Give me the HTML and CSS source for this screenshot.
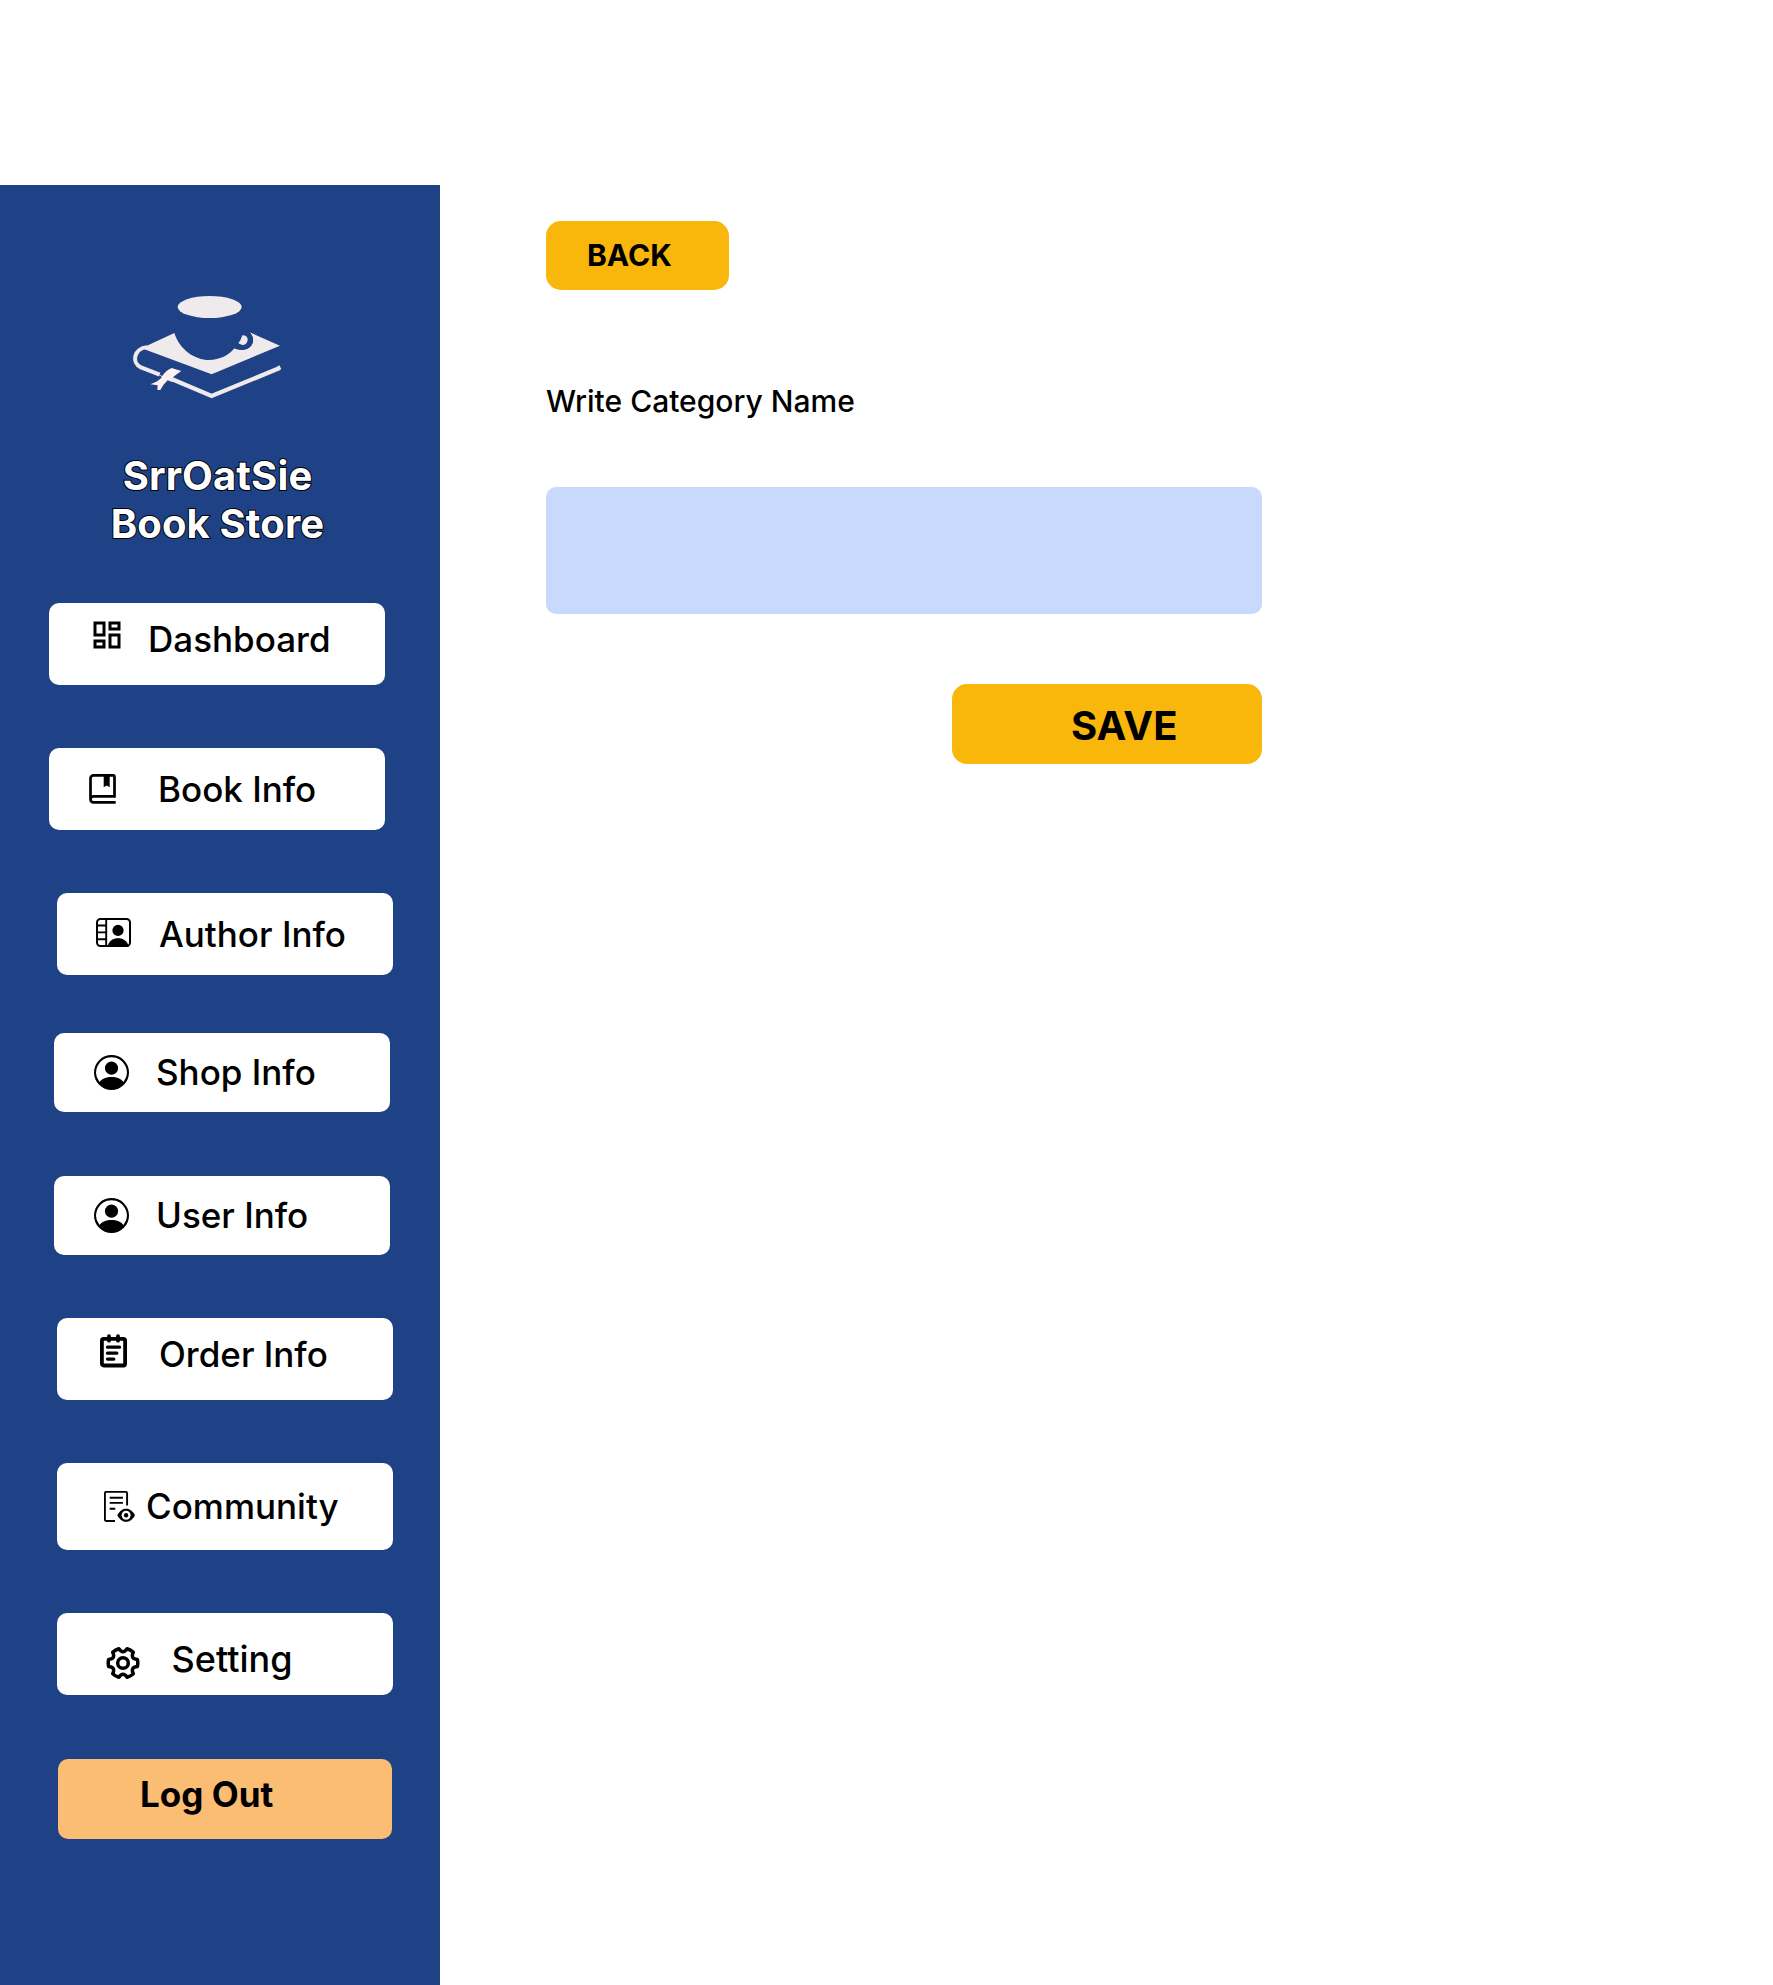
FILE: index.html
```html
<!DOCTYPE html>
<html lang="en">
<head>
<meta charset="utf-8">
<title>SrrOatSie Book Store</title>
<link rel="stylesheet" href="styles.css">
</head>
<body>
<div class="layout">
  <aside class="sidebar">
    <svg class="logo" viewBox="100 76 446 312" aria-hidden="true">
      <ellipse cx="330" cy="112" rx="96" ry="33" fill="#efebec"/>
      <path d="M132 233L224 190C240 240 285 271 328 271C360 271 388 257 404 236C430 247 462 236 460 209C460 201 455 194 450 188L541 228L336 314L138 240Z" fill="#efebec"/>
      <path d="M424 194C440 190 450 200 448 212C446 226 432 233 410 225" fill="none" stroke="#1f4186" stroke-width="6"/>
      <path d="M404 236L410 222L424 193L450 188C464 204 464 222 450 233C438 243 420 243 404 236Z" fill="#1f4186"/>
      <path d="M428 197Q445 197 444 211Q442 226 428 226L416 221Q424 211 428 197Z" fill="#efebec"/>
      <path d="M142 233C104 235 94 279 124 293L180 315" fill="none" stroke="#efebec" stroke-width="12"/>
      <path d="M214 327L336 379L540 295" fill="none" stroke="#efebec" stroke-width="13"/>
      <path d="M534 290L539 287L545 298L536 302Z" fill="#efebec"/>
      <path d="M216 295Q230 300 245 304Q224 318 213 329L220 338L204 332Q190 345 182 361L173 361L174 347L152 344Q176 336 187 322L174 313L188 319Q198 303 216 295Z" fill="#fff1f1"/>
    </svg>
    <h1 class="brand">SrrOatSie<br>Book Store</h1>
    <nav class="menu">
      <a class="item dashboard">
        <svg class="icon" width="36" height="36" viewBox="0 0 24 24"><path d="M13 9V3h8v6zM3 13V3h8v10zm10 8V11h8v10zM3 21v-6h8v6zm2-10h4V5H5zm10 8h4v-6h-4zm0-12h4V5h-4zM5 19h4v-2H5z"/></svg>
        <span class="label">Dashboard</span>
      </a>
      <a class="item book">
        <svg class="icon" width="27" height="30" viewBox="0 0 27 30"><path class="line" stroke-width="2.7" d="M26.7 28.4H4.5a3 3 0 0 1-3-3V4.3a3 3 0 0 1 3-3H24a1.500 1.500 0 0 1 1.500 1.500v19.500H4.500a3 3 0 0 0-3 3"/><path d="M14.700 1h6v12.300l-3-1.900-3 1.900z"/></svg>
        <span class="label">Book Info</span>
      </a>
      <a class="item author">
        <svg class="icon" width="35" height="29" viewBox="0 0 35 29"><rect class="line" x="1" y="1" width="33" height="27" rx="3.5" stroke-width="2"/><path class="line" stroke-width="1.900" d="M10.200 1v27M1 7.500h9M1 14.400h9M1 21.300h9"/><circle cx="22" cy="12.400" r="5.600"/><path d="M11.500 28.500C13 22.600 17 20.300 22 20.300S31 22.600 33 28.500z"/></svg>
        <span class="label">Author Info</span>
      </a>
      <a class="item shop">
        <svg class="icon" width="35" height="35" viewBox="0 0 16 16"><path d="M11 6a3 3 0 1 1-6 0 3 3 0 0 1 6 0"/><path fill-rule="evenodd" d="M0 8a8 8 0 1 1 16 0A8 8 0 0 1 0 8m8-7a7 7 0 0 0-5.468 11.370C3.242 11.226 4.805 10 8 10s4.757 1.225 5.468 2.370A7 7 0 0 0 8 1"/></svg>
        <span class="label">Shop Info</span>
      </a>
      <a class="item user">
        <svg class="icon" width="35" height="35" viewBox="0 0 16 16"><path d="M11 6a3 3 0 1 1-6 0 3 3 0 0 1 6 0"/><path fill-rule="evenodd" d="M0 8a8 8 0 1 1 16 0A8 8 0 0 1 0 8m8-7a7 7 0 0 0-5.468 11.370C3.242 11.226 4.805 10 8 10s4.757 1.225 5.468 2.370A7 7 0 0 0 8 1"/></svg>
        <span class="label">User Info</span>
      </a>
      <a class="item order">
        <svg class="icon" width="27" height="34" viewBox="0 0 27 34"><rect class="line" x="1.9" y="4.900" width="23.200" height="26.600" rx="1.800" stroke-width="3.800"/><path class="line" stroke-linecap="round" stroke-width="3.800" d="M9 2.100v4.600M18 2.100v4.600"/><path class="line" stroke-linecap="round" stroke-width="3.300" d="M7.500 13.200h12M7.500 19.200h9.300M7.500 25.100h6.300"/></svg>
        <span class="label">Order Info</span>
      </a>
      <a class="item community">
        <svg class="icon" width="31" height="31" viewBox="0 0 31 31"><path class="line" stroke-width="1.900" d="M11 30H2.400a1.500 1.500 0 0 1-1.500-1.500V2.400A1.500 1.500 0 0 1 2.400.900h19.200a1.500 1.500 0 0 1 1.500 1.500v12.100M5.700 6.700h13.200M5.700 11.900h13.200M5.700 17.700h5.600"/><path d="M13.300 24.200C16 19.600 19 17.800 22.100 17.800S28.300 19.600 31 24.200C28.300 29 25.300 30.800 22.100 30.800S16 29 13.300 24.200z"/><circle class="hole" cx="22.100" cy="24.300" r="4.500"/><circle cx="22.100" cy="24.300" r="2.200"/></svg>
        <span class="label">Community</span>
      </a>
      <a class="item setting">
        <svg class="icon" width="34" height="34" viewBox="-17 -17 34 34"><path class="line" stroke-width="3.500" stroke-linejoin="round" d="M14.360-3.580A14.800 14.800 0 0 1 14.360 3.580Q7.190 4.150 10.280 10.650A14.800 14.800 0 0 1 4.080 14.230Q0 8.300-4.080 14.230A14.800 14.800 0 0 1-10.280 10.650Q-7.190 4.150-14.360 3.580A14.800 14.800 0 0 1-14.360-3.580Q-7.190-4.150-10.280-10.650A14.800 14.800 0 0 1-4.080-14.230Q0-8.300 4.080-14.230A14.800 14.800 0 0 1 10.280-10.650Q7.190-4.150 14.360-3.580z"/><circle class="line" r="5.300" stroke-width="3.500"/></svg>
        <span class="label">Setting</span>
      </a>
      <a class="item logout"><span class="label">Log Out</span></a>
    </nav>
  </aside>
  <main class="content">
    <button class="btn back">BACK</button>
    <label class="field-label" for="category">Write Category Name</label>
    <input class="field" id="category" type="text">
    <button class="btn save">SAVE</button>
  </main>
</div>
</body>
</html>
```
FILE: styles.css
```css
* { box-sizing: border-box; }

body {
  margin: 0;
  padding-top: 185px;
  background: #fff;
  color: #000;
  font-family: Inter, sans-serif;
}

.layout {
  display: flex;
  height: 1800px;
}

.sidebar {
  width: 440px;
  padding-top: 110px;
  background: #1f4186;
}

.logo {
  display: block;
  width: 148.67px;
  height: 104px;
  margin-left: 133.33px;
}

.brand {
  width: 435px;
  margin: 53px 0 0;
  color: #fff;
  font-size: 40px;
  font-weight: 700;
  line-height: 48px;
  letter-spacing: 0.12px;
  text-align: center;
  -webkit-text-stroke: 2px #000;
  paint-order: stroke fill;
}

.menu {
  display: flex;
  flex-direction: column;
  gap: 63px;
  margin-top: 55px;
}

.item {
  display: flex;
  align-items: flex-start;
  width: 336px;
  height: 82px;
  margin-left: 57px;
  border-radius: 10px;
  background: #fff;
}

.icon {
  flex: none;
  fill: #000;
}

.line {
  fill: none;
  stroke: #000;
}

.hole { fill: #fff; }

.label {
  font-size: 35px;
  font-weight: 500;
  line-height: 44px;
  white-space: nowrap;
}

.dashboard { margin-left: 49px; padding-left: 40px; }
.dashboard .icon { margin-top: 14px; }
.dashboard .label { margin: 14px 0 0 23px; }

.book { margin-left: 49px; padding-left: 40px; }
.book .icon { margin-top: 26px; }
.book .label { margin: 19px 0 0 42px; }

.author { padding-left: 39px; }
.author .icon { margin-top: 25.3px; }
.author .label { margin: 19px 0 0 28px; }

.shop { height: 79px; margin: -5px 0 0 54px; padding-left: 40px; }
.shop .icon { margin-top: 22px; }
.shop .label { margin: 17px 0 0 27px; }

.user { height: 79px; margin: 1px 0 0 54px; padding-left: 40px; }
.user .icon { margin-top: 22px; }
.user .label { margin: 17px 0 0 27px; }

.order { padding-left: 43px; }
.order .icon { margin-top: 15.5px; }
.order .label { margin: 14px 0 0 32px; }

.community { height: 87px; padding-left: 47px; }
.community .icon { margin-top: 28px; }
.community .label { margin: 21px 0 0 11px; }

.setting { padding-left: 48.5px; }
.setting .icon { margin-top: 32.5px; }
.setting .label { margin: 24px 0 0 32px; font-size: 36px; }

.logout {
  width: 334px;
  height: 80px;
  margin: 1px 0 0 58px;
  padding-left: 82px;
  background: #fbbc74;
}
.logout .label { margin-top: 13px; font-weight: 700; }

.content {
  display: flex;
  flex-direction: column;
  align-items: flex-start;
  width: 822px;
  padding: 36px 0 0 106px;
}

.btn {
  border: 0;
  border-radius: 15px;
  background: #f9b60b;
  color: #000;
  font-family: inherit;
  font-weight: 700;
  text-align: left;
}

.back {
  width: 183px;
  height: 69px;
  padding: 0 0 2px 41px;
  font-size: 30px;
}

.field-label {
  margin-top: 93px;
  font-size: 30px;
  font-weight: 500;
  line-height: 36px;
}

.field {
  width: 716px;
  height: 127px;
  margin-top: 68px;
  padding: 0 24px;
  border: 0;
  border-radius: 10px;
  background: #c7d9fd;
  font: inherit;
  font-size: 30px;
}

.save {
  align-self: flex-end;
  width: 310px;
  height: 80px;
  margin-top: 70px;
  padding: 3px 0 0 119px;
  font-size: 40px;
}
```
